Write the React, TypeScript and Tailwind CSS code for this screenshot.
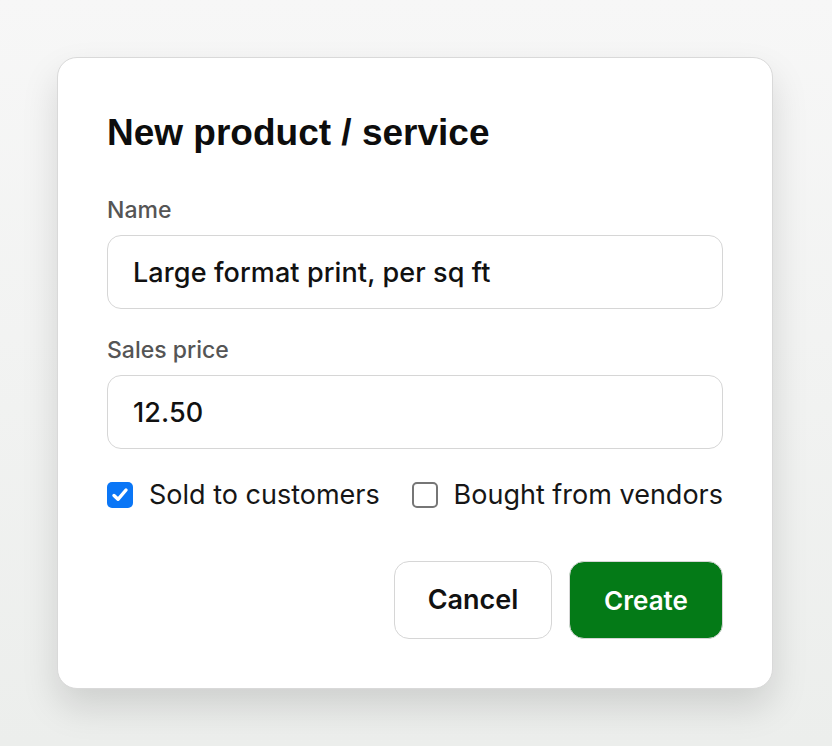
import { useState } from "react";

function Field({
  label,
  value,
  onChange,
}: {
  label: string;
  value: string;
  onChange: (v: string) => void;
}) {
  return (
    <div className="flex flex-col">
      <label className="font-['Inter',sans-serif] text-[23px] leading-[24px] font-medium text-[#555555]">
        {label}
      </label>
      <input
        value={value}
        onChange={(e) => onChange(e.target.value)}
        className="mt-[13px] h-[74px] w-full rounded-[14px] border-[1.5px] border-[#d6d6d6] bg-white px-[25px] font-['Inter',sans-serif] text-[27px] font-medium tracking-[0.1px] text-[#111111] outline-none"
      />
    </div>
  );
}

function Check({
  checked,
  label,
  onToggle,
}: {
  checked: boolean;
  label: string;
  onToggle: () => void;
}) {
  return (
    <button
      type="button"
      onClick={onToggle}
      className="flex items-center gap-[16px] font-['Inter',sans-serif] text-[27px] leading-[30px] text-[#161616]"
    >
      {checked ? (
        <span className="flex h-[26px] w-[26px] items-center justify-center rounded-[5px] bg-[#0a76f6]">
          <svg width="20" height="20" viewBox="0 0 20 20" fill="none">
            <path
              d="M4 10.5 L8 14.3 L16 5"
              stroke="white"
              strokeWidth="3.4"
              strokeLinecap="round"
              strokeLinejoin="round"
            />
          </svg>
        </span>
      ) : (
        <span className="h-[26px] w-[26px] rounded-[5px] border-2 border-[#767676] bg-white" />
      )}
      <span>{label}</span>
    </button>
  );
}

export default function App() {
  const [name, setName] = useState("Large format print, per sq ft");
  const [price, setPrice] = useState("12.50");
  const [sold, setSold] = useState(true);
  const [bought, setBought] = useState(false);

  return (
    <div className="min-h-[746px] w-full bg-gradient-to-b from-[#f7f7f7] to-[#eceeec] pt-[57px] pl-[57px]">
      <div className="w-[716px] rounded-[20px] border border-[#d9d9d9] bg-white px-[49px] pt-[53px] pb-[49px] shadow-[0_18px_36px_rgba(0,0,0,0.13)]">
        <h1 className="font-['Liberation_Sans',Arial,sans-serif] text-[37px] leading-[44px] font-bold text-[#0d0d0d]">
          New product / service
        </h1>

        <div className="mt-[43px] flex flex-col gap-[29px]">
          <Field label="Name" value={name} onChange={setName} />
          <Field label="Sales price" value={price} onChange={setPrice} />
        </div>

        <div className="mt-[31px] flex items-center justify-between">
          <Check checked={sold} label="Sold to customers" onToggle={() => setSold(!sold)} />
          <Check checked={bought} label="Bought from vendors" onToggle={() => setBought(!bought)} />
        </div>

        <div className="mt-[51px] flex justify-end gap-[17px]">
          <button
            type="button"
            className="h-[78px] w-[158px] rounded-[15px] border-[1.5px] border-[#d6d6d6] bg-white font-['Inter',sans-serif] text-[27px] font-semibold text-[#111111]"
          >
            Cancel
          </button>
          <button
            type="button"
            className="h-[78px] w-[154px] rounded-[15px] border-[1.5px] border-[#d6d6d6] bg-[#047a17] font-['Inter',sans-serif] text-[26px] font-semibold text-white"
          >
            Create
          </button>
        </div>
      </div>
    </div>
  );
}
